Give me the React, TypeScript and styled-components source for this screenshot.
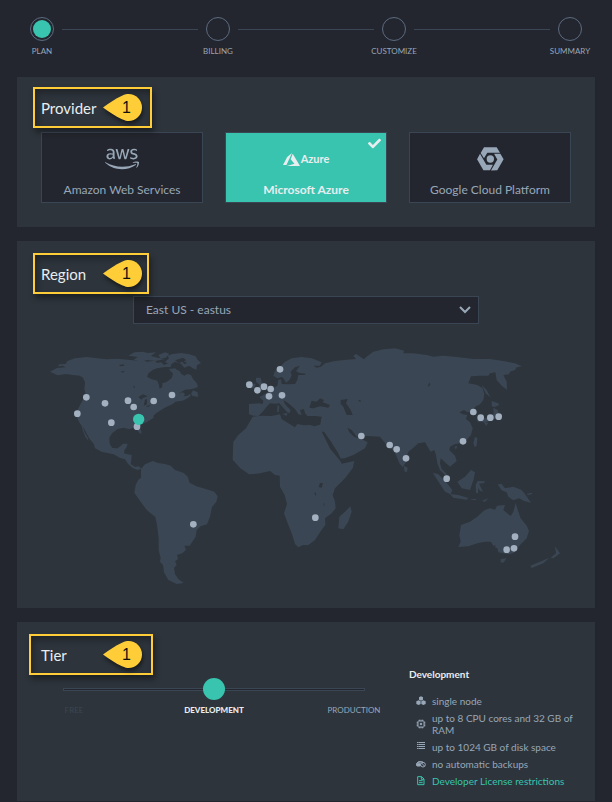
import React, { useState } from "react";
import styled, { createGlobalStyle, css } from "styled-components";
import { FaAws, FaCheck } from "react-icons/fa";

const color = {
  page: "#23262e",
  panel: "#2d343b",
  line: "#3b4654",
  ring: "#5d6b80",
  text: "#98a7b8",
  bright: "#e9edf0",
  accent: "#38c4ae",
  marker: "#ffcd38",
};

const GlobalStyle = createGlobalStyle`
  *, *::before, *::after { box-sizing: border-box; }
  body {
    margin: 0;
    background: ${color.page};
    color: ${color.text};
    font-family: Lato, "Open Sans", sans-serif;
    font-size: 12px;
  }
  button, select, input { font: inherit; color: inherit; }
`;

const Page = styled.main`
  display: flex;
  flex-direction: column;
  gap: 14px;
  padding: 17px 17px 0;
`;

/* Stepper */

const Stepper = styled.ol`
  display: flex;
  align-items: flex-start;
  gap: 8px;
  height: 46px;
  margin: 0;
  padding: 0 13px;
  list-style: none;
`;

const Step = styled.li`
  display: flex;
  flex-direction: column;
  align-items: center;
  gap: 4px;
  width: 24px;
  font-size: 8px;
  line-height: 12px;
  white-space: nowrap;
  text-transform: uppercase;
`;

const StepDot = styled.span<{ $active?: boolean }>`
  width: 24px;
  height: 24px;
  padding: 2px;
  border: 1px solid ${color.ring};
  border-radius: 50%;
  background: ${(p) => (p.$active ? color.accent : "transparent")};
  background-clip: content-box;
`;

const StepLine = styled.li`
  flex: 1;
  height: 1px;
  margin-top: 12px;
  background: ${color.line};
`;

/* Panels */

const Panel = styled.section<{ $top?: number }>`
  padding: ${(p) => p.$top ?? 12}px 24px 24px;
  background: ${color.panel};
`;

const Heading = styled.div<{ $width: number; $inset?: number }>`
  position: relative;
  z-index: 1;
  display: flex;
  align-items: center;
  width: ${(p) => p.$width}px;
  height: 41px;
  margin-left: -${(p) => p.$inset ?? 8}px;
  padding-left: ${(p) => (p.$inset ?? 8) - 2}px;
  border: 2px solid ${color.marker};
  box-shadow: 2px 4px 6px rgba(0, 0, 0, 0.4), inset 2px 4px 6px rgba(0, 0, 0, 0.3);
`;

const Title = styled.h2`
  width: 62px;
  margin: 0;
  color: ${color.bright};
  font-size: 15px;
  font-weight: 400;
  line-height: 20px;
`;

const Marker = styled.span`
  display: grid;
  flex: none;
  width: 39px;
  height: 27px;
  color: #111;
  font-family: "Liberation Sans", Arial, sans-serif;
  font-size: 16px;
  line-height: 27px;
  > * { grid-area: 1 / 1; }
  > b { z-index: 1; padding-left: 19px; font-weight: 400; }
  svg { overflow: visible; filter: drop-shadow(1px 3px 2px rgba(0, 0, 0, 0.5)); }
`;

function Callout({ n }: { n: number }) {
  return (
    <Marker>
      <svg width="39" height="27" viewBox="0 0 39 27" aria-hidden="true">
        <path
          d="M0 13.500C6 9 12 5 19 1.700C22 .3 24 0 25.500 0A13.500 13.500 0 0 1 25.500 27C24 27 22 26.700 19 25.300C12 22 6 18 0 13.500Z"
          fill={color.marker}
        />
      </svg>
      <b>{n}</b>
    </Marker>
  );
}

/* Providers */

const Columns = styled.div`
  display: grid;
  grid-template-columns: repeat(3, minmax(0, 1fr));
  gap: 22px;
`;

const Providers = styled(Columns)`
  margin-top: 4px;
`;

const ProviderCard = styled.button<{ $selected: boolean }>`
  position: relative;
  display: flex;
  flex-direction: column;
  align-items: center;
  height: 71px;
  padding: 8px 0 0;
  border: 1px solid ${color.line};
  background: ${color.page};
  line-height: 16px;
  cursor: pointer;
  ${(p) =>
    p.$selected &&
    css`
      background: ${color.accent};
      color: ${color.bright};
      font-weight: 700;
    `}
`;

const Logo = styled.span`
  display: flex;
  align-items: center;
  justify-content: center;
  gap: 1px;
  height: 36px;
  margin-bottom: 5px;
  font-size: 11px;
  font-weight: 700;
`;

const Tick = styled(FaCheck)`
  position: absolute;
  top: 4px;
  right: 5px;
`;

const AzureLogo = () => (
  <>
    <svg width="17" height="13" viewBox="0 0 49 37" fill="currentColor" aria-hidden="true">
      <path d="M26 0 12 11 0 34h10z" />
      <path d="M28 2 22 18 33 31 11 37h38z" />
    </svg>
    Azure
  </>
);

const gcpArm = "M11 18 21 1H59L69 17H31L21 34Z";

const GoogleLogo = () => (
  <svg width="27" height="24" viewBox="0 0 81 72" fill="currentColor" aria-hidden="true">
    <path d={gcpArm} />
    <path d={gcpArm} transform="rotate(120 40 36)" />
    <path d={gcpArm} transform="rotate(240 40 36)" />
    <circle cx="40" cy="36" r="11" />
  </svg>
);

const providers = [
  { id: "aws", name: "Amazon Web Services", logo: <FaAws size={34} /> },
  { id: "azure", name: "Microsoft Azure", logo: <AzureLogo /> },
  { id: "gcp", name: "Google Cloud Platform", logo: <GoogleLogo /> },
];

/* Region */

const RegionPanel = styled(Panel)`
  padding-bottom: 23px;
`;

const SelectBox = styled.div`
  display: grid;
  align-items: center;
  width: 66%;
  max-width: 346px;
  margin: 2px auto 21px;
  > * { grid-area: 1 / 1; }
  > svg { justify-self: end; margin-right: 8px; pointer-events: none; }
`;

const Select = styled.select`
  width: 100%;
  height: 28px;
  padding: 0 12px 2px;
  border: 1px solid ${color.line};
  border-radius: 0;
  background: ${color.page};
  appearance: none;
`;

const Map = styled.svg`
  display: block;
  width: 100%;
  height: auto;
`;

const land = [
  // North America
  "M27 80 48 69 74 67 66 62 49 64 56 58 74 57 79 48 102 40 137 36 162 39 197 43 227 41 262 44 292 47 304 45 318 50 342 47 348 54 360 52 369 60 382 55 384 48 392 55 389 66 372 66 348 70 336 74 323 84 318 95 330 102 349 107 353 118 356 131 364 126 364 115 378 110 392 99 396 86 390 79 400 73 416 78 420 86 430 92 440 87 450 90 456 102 467 114 471 125 462 130 448 133 432 134 422 140 412 146 425 142 432 147 428 154 440 152 446 147 450 152 436 162 424 167 404 170 394 178 374 187 362 194 345 205 337 213 338 218 318 231 303 238 295 246 301 258 301 267 295 264 286 252 275 249 266 253 248 248 230 252 214 264 205 278 206 296 214 309 230 310 240 302 246 296 260 296 256 308 250 316 249 325 260 328 272 330 271 344 269 357 282 366 293 364 301 371 290 375 275 369 261 356 252 343 236 338 218 328 202 325 182 320 162 310 158 296 146 282 135 262 125 244 130 260 140 278 143 288 133 276 126 258 122 242 116 234 109 220 105 204 116 182 128 160 134 148 130 132 132 112 126 98 116 92 96 90 76 87 50 91Z",
  "M262 32 280 22 306 20 320 24 345 22 330 33 350 38 372 42 344 48 318 45 300 50 278 44 290 36Z",
  "M352 30 372 22 385 26 375 38 358 40Z",
  "M372 50 384 40 380 32 395 27 420 24 445 28 464 34 470 45 480 54 468 61 466 74 454 69 444 62 430 68 420 56 402 50 388 60Z",
  "M384 72 402 70 412 78 402 84 390 80Z",
  "M450 146 456 136 470 142 471 156 454 152Z",
  // South America
  "M300 372 312 358 336 348 350 354 372 357 389 362 402 375 427 383 440 395 446 413 466 424 492 431 520 440 530 454 526 470 513 486 507 515 498 538 478 544 467 555 464 575 446 602 430 602 435 614 424 625 408 630 411 642 402 649 407 660 399 668 402 688 412 702 428 714 407 717 382 705 369 682 366 660 357 650 359 640 353 615 353 580 348 540 343 516 318 496 300 472 280 443 284 420 292 404 300 398Z",
  // Europe and Asia
  "M624 208 624 177 652 175 665 177 667 167 655 156 667 150 679 142 697 130 709 122 712 105 720 103 722 117 737 118 762 117 769 105 772 90 792 90 793 86 773 83 765 78 777 62 762 67 749 80 752 92 745 105 735 113 727 100 722 96 709 100 697 92 702 78 717 65 732 50 752 40 782 36 812 40 842 52 837 62 817 62 827 68 840 65 852 55 882 48 917 44 945 42 937 32 945 27 969 43 977 35 997 20 1027 13 1062 10 1089 17 1087 25 1117 25 1157 30 1177 35 1207 32 1247 36 1297 42 1347 42 1387 48 1422 55 1443 64 1427 67 1422 75 1407 80 1404 88 1387 90 1397 110 1398 134 1382 122 1367 105 1363 82 1347 85 1342 92 1317 92 1290 94 1282 115 1309 120 1325 130 1330 148 1327 165 1317 178 1302 185 1297 198 1305 208 1297 208 1287 202 1277 200 1269 195 1255 202 1265 208 1279 210 1275 222 1287 232 1295 250 1290 270 1277 285 1257 295 1242 297 1227 305 1225 315 1242 332 1247 348 1227 365 1212 352 1199 340 1197 355 1202 372 1215 385 1223 400 1212 390 1197 375 1189 355 1185 330 1180 315 1169 320 1152 292 1132 295 1117 308 1102 320 1097 335 1095 352 1085 367 1075 355 1065 330 1057 315 1047 310 1037 300 1017 275 982 273 961 273 947 275 932 255 919 248 925 262 939 275 952 280 962 282 980 292 972 310 937 330 899 344 892 325 872 295 847 260 837 242 842 215 822 213 799 213 792 205 789 192 777 195 782 210 772 208 762 192 742 175 727 165 732 178 749 195 745 205 737 200 715 175 702 176 687 175 677 185 665 200 652 213 637 212Z",
  // Africa
  "M635 215 662 212 692 213 717 208 722 222 742 235 762 247 769 237 788 241 807 240 820 244 842 238 847 260 872 300 897 342 902 356 940 348 935 370 912 400 882 430 875 450 882 470 884 490 872 505 852 520 853 540 838 560 822 585 802 600 786 600 772 607 762 597 752 565 742 540 729 505 738 477 731 450 717 425 716 392 702 390 687 378 657 385 624 388 598 370 575 344 577 290 592 270 615 250Z",
  "M928 484 932 500 922 530 907 553 892 550 895 515 912 500Z",
  // British Isles
  "M645 98 659 98 662 112 676 128 670 136 649 141 656 120 645 110Z",
  "M628 117 644 116 640 130 626 130Z",
  // Mediterranean islands
  "M710 180 715 184 713 202 708 200Z",
  "M724 206 740 204 736 213Z",
  // Pacific islands
  "M1322 120 1337 135 1349 158 1334 145Z",
  "M1352 168 1372 175 1374 181 1360 186 1352 184Z",
  "M1357 188 1371 196 1374 215 1347 228 1332 232 1309 230 1309 222 1339 218 1358 206Z",
  "M1328 230 1342 234 1335 243Z",
  "M1302 275 1309 279 1307 302 1301 307 1297 294Z",
  "M1240 305 1249 302 1245 314Z",
  "M1089 362 1100 368 1098 381 1090 379Z",
  "M1175 383 1192 388 1217 413 1234 435 1229 448 1212 440 1197 417Z",
  "M1227 447 1252 450 1282 459 1277 464 1237 458Z",
  "M1249 410 1272 395 1290 375 1302 382 1298 403 1287 435 1262 430Z",
  "M1304 420 1310 408 1332 409 1330 414 1314 416 1326 440 1317 437 1312 428 1311 445 1305 443Z",
  "M1286 462h22l-6 4zM1322 468l20-8-10 10z",
  "M1370 418 1382 417 1392 430 1417 425 1442 435 1454 450 1470 473 1450 468 1434 460 1417 466 1402 455 1397 442 1382 436Z",
  "M1458 446 1474 443 1472 448 1460 450Z",
  // Oceania
  "M1260 540 1287 530 1309 515 1325 500 1332 495 1347 490 1362 494 1368 482 1392 480 1387 495 1409 513 1417 500 1424 474 1432 500 1439 520 1457 542 1464 558 1457 580 1437 600 1417 625 1402 628 1372 622 1369 610 1362 607 1364 600 1357 603 1350 590 1332 590 1309 595 1282 604 1252 606 1259 590 1255 570Z",
  "M1379 642 1397 640 1387 653 1379 652Z",
  "M1542 604 1557 625 1537 640 1529 638 1545 625Z",
  "M1525 638 1507 655 1472 669 1468 662 1497 650Z",
];

const water = [
  "M234 60 248 58 250 62 238 64ZM238 80l14-3-6 6zM276 125l6-3-2 8z",
  "M292 156 306 148 320 154 304 160 296 182 302 164ZM312 164l6-2 0 16-10 4zM314 184l16-4-8 6z",
  "M402 46 426 38 436 46 414 54ZM420 44l18 10-8 4z",
  "M805 188 812 167 827 170 837 160 849 165 845 172 867 180 862 188 837 184 817 190Z",
  "M899 165 920 162 915 175 929 195 935 210 917 210 907 185 899 176Z",
  "M842 260 850 261 872 293 898 340 940 345 902 354 896 346 868 312Z",
  "M837 414 846 415 842 428 833 426ZM821 442l4 3 0 8-4-6zM847 475l3 1-1 10z",
  "M952 165h6l2 6-6-2zM1160 125l5-13 3 8z",
];

const pins: [number, number][] = [
  [136, 157], [109, 206], [192, 175], [261, 167], [278, 186], [338, 168], [393, 150],
  [211, 233], [288, 245], [457, 538], [717, 73], [625, 119], [649, 136], [669, 125],
  [689, 132], [684, 154], [723, 151], [961, 273], [1046, 300], [1067, 313], [823, 518],
  [1095, 340], [1217, 401], [1266, 289], [1297, 201], [1319, 218], [1348, 218],
  [1373, 215], [1422, 575], [1397, 614], [1419, 610],
];

function WorldMap() {
  return (
    <Map viewBox="0 0 1590 720" role="img" aria-label="Available regions">
      <g fill={color.line}>{land.map((d) => <path key={d} d={d} />)}</g>
      <g fill={color.panel}>{water.map((d) => <path key={d} d={d} />)}</g>
      <g fill="#a3b0c0">
        {pins.map(([x, y]) => <circle key={`${x}-${y}`} cx={x} cy={y} r="10" />)}
      </g>
      <circle cx="293" cy="223" r="17" fill={color.accent} />
    </Map>
  );
}

/* Tier */

const TierPanel = styled(Panel)`
  min-height: 179px;
  padding-bottom: 12px;
`;

const TierMain = styled.div`
  grid-column: span 2;
`;

const TierSlider = styled.div`
  display: flex;
  flex-direction: column;
  gap: 4px;
  margin: 3px 22px 0;
`;

const Range = styled.input`
  width: 100%;
  height: 22px;
  margin: 0;
  background: transparent;
  appearance: none;
  &::-webkit-slider-runnable-track {
    height: 3px;
    border: 1px solid ${color.line};
    background: ${color.page};
  }
  &::-webkit-slider-thumb {
    width: 22px;
    height: 22px;
    margin-top: -11px;
    border-radius: 50%;
    background: ${color.accent};
    appearance: none;
  }
`;

const TierNames = styled.div`
  display: flex;
  justify-content: space-between;
  font-size: 8px;
  line-height: 12px;
  text-transform: uppercase;
`;

const TierName = styled.span<{ $state?: "active" | "disabled" }>`
  display: flex;
  justify-content: center;
  width: 22px;
  white-space: nowrap;
  ${(p) => p.$state === "active" && css`color: ${color.bright}; font-weight: 900;`}
  ${(p) => p.$state === "disabled" && css`color: ${color.line};`}
`;

const Details = styled.div`
  margin-right: -12px;
  padding-top: 34px;
  font-size: 10px;
  line-height: 12px;
`;

const DetailsTitle = styled.h3`
  margin: 0 0 15px;
  color: ${color.bright};
  font-size: 10px;
  font-weight: 700;
`;

const Features = styled.ul`
  display: flex;
  flex-direction: column;
  gap: 5px;
  margin: 0;
  padding: 0 0 0 7px;
  list-style: none;
`;

const Feature = styled.li<{ $accent?: boolean }>`
  display: flex;
  align-items: center;
  gap: 6px;
  color: ${(p) => (p.$accent ? color.accent : color.text)};
  svg { flex: none; }
`;

const FeatureLink = styled.a`
  color: inherit;
  text-decoration: none;
`;

const icon = { width: 10, height: 10, viewBox: "0 0 30 30", "aria-hidden": true } as const;

const NodeIcon = () => (
  <svg {...icon} fill="currentColor">
    <path d="m15 1 6 3v7l-6 3-6-3V4zM8 13l6 3v8l-6 3-7-3v-8zM22 13l7 3v8l-7 3-6-3v-8z" />
  </svg>
);
const ChipIcon = () => (
  <svg {...icon} fill="none" stroke="currentColor" strokeWidth="3">
    <rect x="6" y="6" width="18" height="18" rx="2" />
    <path d="M10 2v4M15 2v4M20 2v4M10 24v4M15 24v4M20 24v4M2 10h4M2 15h4M2 20h4M24 10h4M24 15h4M24 20h4" />
    <path d="M13 13h4v4h-4z" fill="currentColor" />
  </svg>
);
const DiskIcon = () => (
  <svg {...icon} fill="currentColor">
    <path d="M3 0h3v3H3zM7 0h20v3H7zM3 6h3v3H3zM7 6h20v3H7zM3 12h3v3H3zM7 12h20v3H7zM3 18h3v3H3zM7 18h20v3H7z" />
  </svg>
);
const BackupIcon = () => (
  <svg {...icon} fill="none" stroke="currentColor" strokeWidth="3">
    <path d="M1 14h12v7H3q-2-2-2-7zM2 13q5-8 13-5l6 1" fill="currentColor" />
    <circle cx="21" cy="17" r="7" />
    <path d="m17 12 8 9" />
  </svg>
);
const LicenseIcon = () => (
  <svg {...icon} fill="none" stroke="currentColor" strokeWidth="3">
    <path d="M5 2h12l7 7v17H5zM16 2v8h8M9 14h11M9 20h11" />
  </svg>
);

const steps = ["Plan", "Billing", "Customize", "Summary"];

export default function App() {
  const [provider, setProvider] = useState("azure");
  const [tier, setTier] = useState(1);

  return (
    <>
      <GlobalStyle />
      <Page>
        <Stepper>
          {steps.map((name, i) => (
            <React.Fragment key={name}>
              {i > 0 && <StepLine aria-hidden="true" />}
              <Step>
                <StepDot $active={i === 0} />
                {name}
              </Step>
            </React.Fragment>
          ))}
        </Stepper>

        <Panel $top={10}>
          <Heading $width={119}>
            <Title>Provider</Title>
            <Callout n={1} />
          </Heading>
          <Providers>
            {providers.map((p) => (
              <ProviderCard
                key={p.id}
                type="button"
                $selected={p.id === provider}
                aria-pressed={p.id === provider}
                onClick={() => setProvider(p.id)}
              >
                <Logo>{p.logo}</Logo>
                {p.name}
                {p.id === provider && <Tick size={13} />}
              </ProviderCard>
            ))}
          </Providers>
        </Panel>

        <RegionPanel>
          <Heading $width={116}>
            <Title>Region</Title>
            <Callout n={1} />
          </Heading>
          <SelectBox>
            <Select aria-label="Region" defaultValue="eastus">
              <option value="eastus">East US - eastus</option>
            </Select>
            <svg width="12" height="8" viewBox="0 0 12 8" fill="none" stroke="currentColor" strokeWidth="2">
              <path d="m1 1 5 5 5-5" />
            </svg>
          </SelectBox>
          <WorldMap />
        </RegionPanel>

        <TierPanel>
          <Columns>
            <TierMain>
              <Heading $width={124} $inset={12}>
                <Title>Tier</Title>
                <Callout n={1} />
              </Heading>
              <TierSlider>
                <Range
                  type="range"
                  min={0}
                  max={2}
                  value={tier}
                  aria-label="Tier"
                  onChange={(e) => setTier(Math.max(1, Number(e.target.value)))}
                />
                <TierNames>
                  <TierName $state="disabled">Free</TierName>
                  <TierName $state={tier === 1 ? "active" : undefined}>Development</TierName>
                  <TierName $state={tier === 2 ? "active" : undefined}>Production</TierName>
                </TierNames>
              </TierSlider>
            </TierMain>
            <Details>
              <DetailsTitle>Development</DetailsTitle>
              <Features>
                <Feature><NodeIcon />single node</Feature>
                <Feature><ChipIcon />up to 8 CPU cores and 32 GB of RAM</Feature>
                <Feature><DiskIcon />up to 1024 GB of disk space</Feature>
                <Feature><BackupIcon />no automatic backups</Feature>
                <Feature $accent>
                  <LicenseIcon />
                  <FeatureLink href="#license">Developer License restrictions</FeatureLink>
                </Feature>
              </Features>
            </Details>
          </Columns>
        </TierPanel>
      </Page>
    </>
  );
}
